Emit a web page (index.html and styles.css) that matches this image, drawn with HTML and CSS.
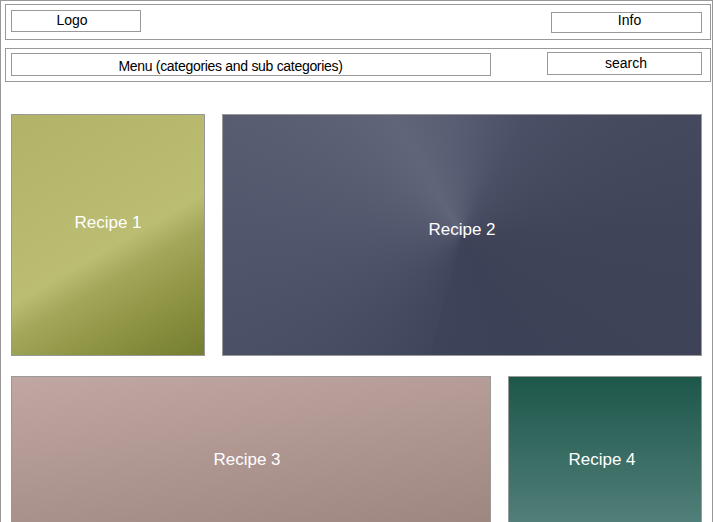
FILE: index.html
```html
<!DOCTYPE html>
<html lang="en">
<head>
<meta charset="utf-8">
<title>Recipes</title>
<link rel="stylesheet" href="styles.css">
</head>
<body>
<div class="frame">
  <header class="bar bar-top">
    <div class="box logo">Logo</div>
    <div class="box info">Info</div>
  </header>
  <nav class="bar bar-nav">
    <div class="box menu">Menu (categories and sub categories)</div>
    <div class="box search">search</div>
  </nav>
  <main class="grid">
    <div class="row">
      <div class="card r1">Recipe 1</div>
      <div class="card r2">Recipe 2</div>
    </div>
    <div class="row row-2">
      <div class="card r3">Recipe 3</div>
      <div class="card r4">Recipe 4</div>
    </div>
  </main>
</div>
</body>
</html>
```

FILE: styles.css
```css
html, body {
  margin: 0;
  padding: 0;
  overflow: hidden;
  background: #fff;
}

body {
  font-family: "Liberation Sans", Arial, sans-serif;
  color: #000;
}

.frame {
  box-sizing: border-box;
  width: 713px;
  height: 540px;
  border: 1px solid #999;
  padding: 3px 0 0 4px;
  overflow: hidden;
}

.bar {
  box-sizing: border-box;
  width: 706px;
  border: 1px solid #999;
  display: flex;
  justify-content: space-between;
  align-items: flex-start;
}

.bar-top {
  height: 36px;
  padding: 5px 8px 0 5px;
}

.bar-nav {
  height: 34px;
  margin-top: 8px;
  padding: 3px 8px 0 5px;
}

.box {
  box-sizing: border-box;
  border: 1px solid #999;
  font-size: 14px;
  text-align: center;
}

.logo {
  width: 130px;
  height: 22px;
  line-height: 18px;
  padding-right: 8px;
}

.info {
  width: 151px;
  height: 21px;
  line-height: 15px;
  margin-top: 2px;
  padding-left: 6px;
}

.menu {
  width: 480px;
  height: 23px;
  line-height: 24px;
  margin-top: 1px;
  padding-right: 41px;
  letter-spacing: -0.3px;
}

.search {
  width: 155px;
  height: 23px;
  line-height: 20px;
  padding-left: 3px;
}

.grid {
  margin: 32px 0 0 6px;
  width: 691px;
  display: flex;
  flex-direction: column;
  gap: 20px;
}

.row {
  display: flex;
  gap: 17px;
  height: 242px;
}

.row-2 {
  height: 170px;
}

.card {
  box-sizing: border-box;
  border: 1px solid #999;
  color: #fff;
  font-size: 17px;
  line-height: 20px;
  display: flex;
  justify-content: center;
  align-items: flex-start;
}

.r1 {
  width: 194px;
  padding-top: 98px;
  background: linear-gradient(150deg, #b2b369 0%, #bbbd73 54%, #a3a659 64%, #888f3e 84%, #757d30 100%);
}

.r2 {
  width: 480px;
  padding-top: 105px;
  background: conic-gradient(from 195deg at 50% 50%,
    #3f455a 0deg,
    #51566c 75deg,
    #60657a 135deg,
    #575c72 165deg,
    #4a4f65 195deg,
    #3f4459 255deg,
    #3b4156 320deg,
    #3d4358 360deg);
}

.r3 {
  width: 480px;
  padding-top: 73px;
  padding-right: 8px;
  background: linear-gradient(172deg, #c1a7a2 0%, #9a837d 100%);
}

.r4 {
  width: 194px;
  padding-top: 73px;
  padding-right: 6px;
  background: linear-gradient(180deg, #1d574a 0%, #598580 100%);
}
```
